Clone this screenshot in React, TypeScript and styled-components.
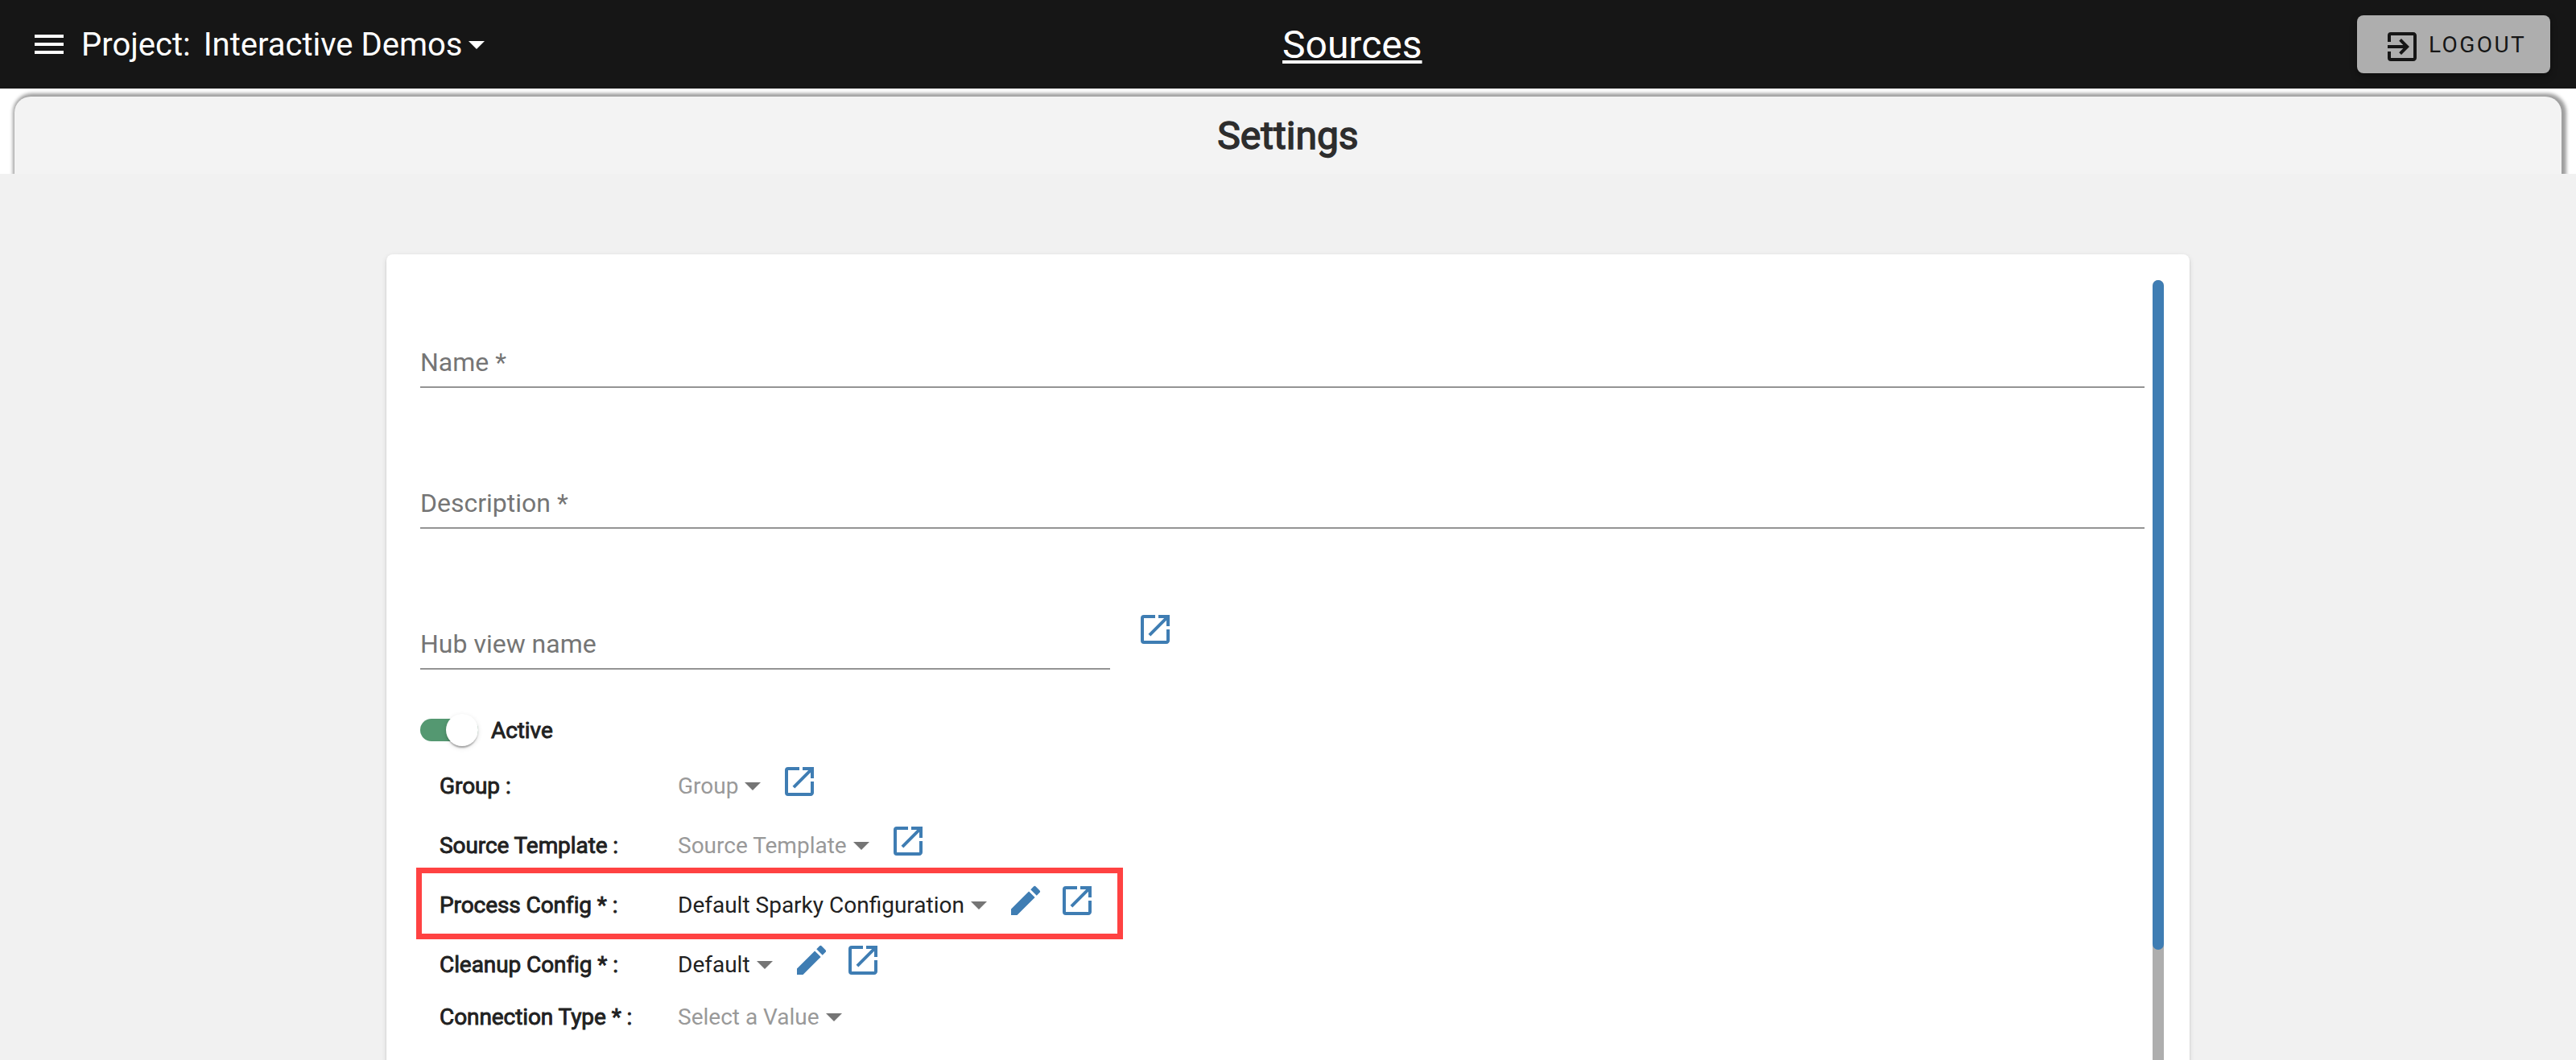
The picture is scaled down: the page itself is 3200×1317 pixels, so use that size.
import styled, { createGlobalStyle } from "styled-components"
import {
  MdArrowDropDown,
  MdCreate,
  MdExitToApp,
  MdMenu,
  MdOpenInNew,
} from "react-icons/md"

const GlobalStyle = createGlobalStyle`
  * {
    box-sizing: border-box;
  }

  body {
    margin: 0;
    background: #f1f1f1;
    font-family: Roboto, "Liberation Sans", sans-serif;
    color: #212121;
  }
`

const Page = styled.div`
  display: flex;
  flex-direction: column;
  width: 100%;
  height: 1317px;
  overflow: hidden;
`

const Toolbar = styled.header`
  display: grid;
  grid-template-columns: 1556px auto 1fr;
  align-items: center;
  flex: none;
  height: 110px;
  padding: 0 32px 0 37px;
  background: #161616;
  color: #fff;
`

const Project = styled.div`
  display: flex;
  align-items: center;
  font-size: 40px;
  line-height: 48px;
  white-space: pre;

  & > span {
    padding-top: 2px;
  }
`

const MenuIcon = styled(MdMenu)`
  width: 48px;
  height: 48px;
  margin-right: 16px;
`

const ProjectName = styled.span`
  margin-left: 16px;
`

const Caret = styled(MdArrowDropDown)<{ $light?: boolean }>`
  flex: none;
  width: 48px;
  height: 48px;
  margin: 0 -14px 0 ${({ $light }) => ($light ? "-7px" : "-6px")};
  color: ${({ $light }) => ($light ? "#fff" : "#757575")};
`

const PageLink = styled.a`
  padding-top: 2px;
  font-size: 48px;
  line-height: 56px;
  text-decoration: underline;
  text-decoration-thickness: 4px;
  text-underline-offset: 3px;
  text-decoration-skip-ink: none;
`

const LogoutButton = styled.button`
  display: flex;
  align-items: center;
  justify-self: end;
  width: 240px;
  height: 72px;
  padding: 0 0 0 32px;
  border: none;
  border-radius: 8px;
  background: #aeaeae;
  box-shadow: 0 4px 8px rgba(0, 0, 0, 0.35);
  color: #161616;
  font-family: inherit;
  font-size: 28px;
  letter-spacing: 2.4px;

  & svg {
    width: 48px;
    height: 48px;
    margin: 6px 9px 0 0;
  }
`

const TitleStrip = styled.div`
  flex: none;
  height: 106px;
  padding: 10px 18px 0;
  background: #fff;
  overflow: hidden;
`

const TitlePanel = styled.h1`
  display: flex;
  align-items: center;
  justify-content: center;
  height: 96px;
  margin: 0;
  border-radius: 20px 20px 0 0;
  background: #f3f3f3;
  box-shadow: 2px 0 4px 4px #9e9e9e;
  color: #2d2d2d;
  font-size: 48px;
  font-weight: 400;
  -webkit-text-stroke: 1.5px currentColor;
`

const Card = styled.main`
  display: flex;
  justify-content: space-between;
  flex: none;
  width: 2240px;
  height: 1100px;
  margin: 100px auto 0;
  padding: 32px 32px 0 42px;
  border-radius: 8px;
  background: #fff;
  box-shadow: 0 4px 2px -2px rgba(0, 0, 0, 0.2), 0 2px 2px rgba(0, 0, 0, 0.14),
    0 2px 6px rgba(0, 0, 0, 0.12);
`

const Form = styled.div`
  display: flex;
  flex-direction: column;
  width: 2142px;
  padding-top: 86px;
`

const Track = styled.div`
  width: 14px;
  border-radius: 7px;
  background: #aeaeae;
`

const Thumb = styled.div`
  height: 832px;
  border-radius: 7px;
  background: #3f7db3;
`

const Fields = styled.div`
  display: flex;
  flex-direction: column;
  gap: 127px;
`

const FieldRow = styled.div`
  display: flex;
  gap: 32px;
`

const Field = styled.div<{ $width?: string }>`
  width: ${({ $width }) => $width ?? "100%"};
  height: 48px;
  padding-bottom: 14px;
  border-bottom: 2px solid #949494;
  color: #757575;
  font-size: 32px;
  line-height: 32px;
`

const OpenIcon = styled(MdOpenInNew)`
  flex: none;
  width: 48px;
  height: 48px;
  color: #3f7db3;

  ${FieldRow} & {
    margin-top: -26px;
  }
`

const EditIcon = styled(MdCreate)`
  flex: none;
  width: 48px;
  height: 48px;
  color: #3f7db3;
`

const ToggleRow = styled.div`
  display: flex;
  align-items: center;
  gap: 16px;
  height: 40px;
  margin: 55px 0 12px;
`

const Switch = styled.div`
  display: flex;
  align-items: center;
  justify-content: flex-end;
  width: 72px;
  height: 28px;
  border-radius: 14px;
  background: #549871;
`

const Knob = styled.div`
  width: 40px;
  height: 40px;
  flex: none;
  border-radius: 50%;
  background: #fff;
  box-shadow: 0 4px 2px -2px rgba(0, 0, 0, 0.2), 0 2px 2px rgba(0, 0, 0, 0.14),
    0 2px 6px rgba(0, 0, 0, 0.12);
`

const Label = styled.span`
  padding-top: 1px;
  font-size: 28px;
  line-height: 32px;
  letter-spacing: -0.08px;
  -webkit-text-stroke: 0.9px currentColor;
`

const OptionRow = styled.div<{ $height?: number }>`
  position: relative;
  display: flex;
  align-items: center;
  height: ${({ $height }) => $height ?? 74}px;
  padding-left: 24px;

  & > ${Label} {
    width: 296px;
  }
`

const Value = styled.span<{ $empty?: boolean }>`
  padding-top: 1px;
  font-size: 28px;
  line-height: 32px;
  color: ${({ $empty }) => ($empty ? "#999" : "#212121")};
`

const Actions = styled.span`
  display: flex;
  gap: 16px;
  margin: 0 0 10px 24px;
`

const Highlight = styled.div`
  position: absolute;
  top: -9px;
  left: -5px;
  width: 878px;
  height: 89px;
  border: 7px solid #ff4242;
`

interface IOption {
  label: string
  value: string
  empty?: boolean
  editable?: boolean
  linked?: boolean
  highlighted?: boolean
  height?: number
}

const options: IOption[] = [
  { label: "Group :", value: "Group", empty: true, linked: true },
  {
    label: "Source Template :",
    value: "Source Template",
    empty: true,
    linked: true,
  },
  {
    label: "Process Config * :",
    value: "Default Sparky Configuration",
    editable: true,
    linked: true,
    highlighted: true,
  },
  {
    label: "Cleanup Config * :",
    value: "Default",
    editable: true,
    linked: true,
  },
  {
    label: "Connection Type * :",
    value: "Select a Value",
    empty: true,
    height: 56,
  },
]

const Option: React.FC<IOption> = ({
  label,
  value,
  empty,
  editable,
  linked,
  highlighted,
  height,
}) => (
  <OptionRow $height={height}>
    <Label>{label}</Label>
    <Value $empty={empty}>{value}</Value>
    <Caret />
    <Actions>
      {editable && <EditIcon />}
      {linked && <OpenIcon />}
    </Actions>
    {highlighted && <Highlight />}
  </OptionRow>
)

const App = () => {
  return (
    <Page>
      <GlobalStyle />

      <Toolbar>
        <Project>
          <MenuIcon />
          <span>Project:</span>
          <ProjectName>Interactive Demos</ProjectName>
          <Caret $light />
        </Project>
        <PageLink>Sources</PageLink>
        <LogoutButton type="button">
          <MdExitToApp />
          LOGOUT
        </LogoutButton>
      </Toolbar>

      <TitleStrip>
        <TitlePanel>Settings</TitlePanel>
      </TitleStrip>

      <Card>
        <Form>
          <Fields>
            <Field>Name *</Field>
            <Field>Description *</Field>
            <FieldRow>
              <Field $width="857px">Hub view name</Field>
              <OpenIcon />
            </FieldRow>
          </Fields>

          <ToggleRow>
            <Switch>
              <Knob />
            </Switch>
            <Label>Active</Label>
          </ToggleRow>

          {options.map((option) => (
            <Option key={option.label} {...option} />
          ))}
        </Form>

        <Track>
          <Thumb />
        </Track>
      </Card>
    </Page>
  )
}

export default App
